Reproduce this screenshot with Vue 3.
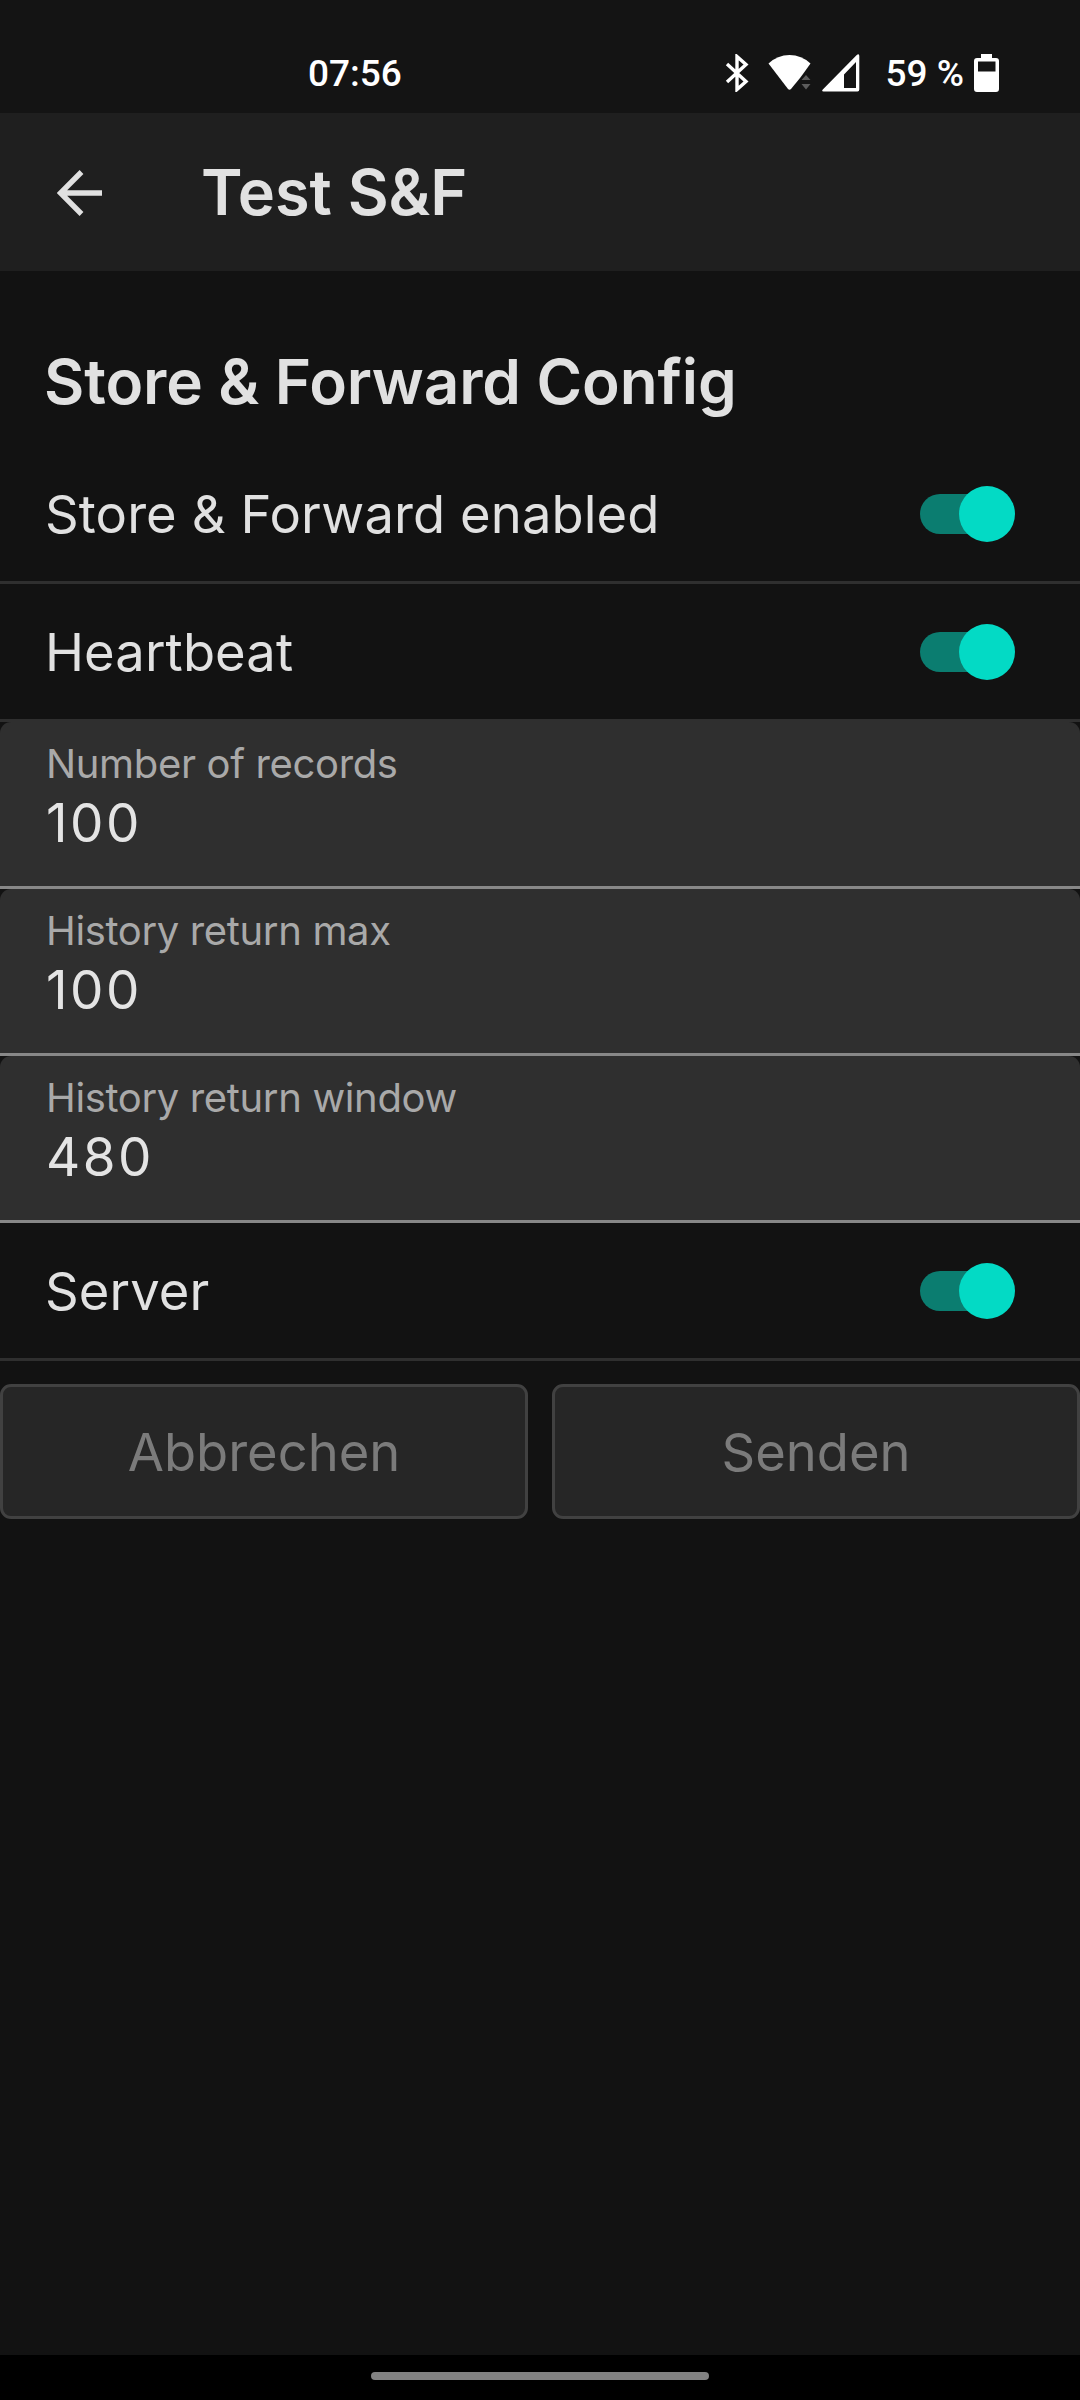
<script setup>

    import { ref } from 'vue';

    const time = ref('07:56');
    const battery = ref('59 %');

    // Module configuration
    const config = ref({
        enabled: true,
        heartbeat: true,
        records: 100,
        historyReturnMax: 100,
        historyReturnWindow: 480,
        server: true,
    });

    const switches = [
        { key: 'enabled', label: 'Store & Forward enabled' },
        { key: 'heartbeat', label: 'Heartbeat' },
    ];

    const fields = [
        { key: 'records', label: 'Number of records' },
        { key: 'historyReturnMax', label: 'History return max' },
        { key: 'historyReturnWindow', label: 'History return window' },
    ];

    const toggle = (key) => {
        config.value[key] = !config.value[key];
    }

</script>

<template>
    <div class="screen">

        <div class="status-bar">
            <span class="time">{{ time }}</span>
            <div class="status-icons">
                <svg class="icon-bluetooth" width="24" height="38" viewBox="0 0 24 38">
                    <path d="M2 10 L21 27.5 L12 35.5 V2.5 L21 10.5 L2 28" fill="none" stroke="#fff" stroke-width="3.4" />
                </svg>
                <svg class="icon-wifi" width="44" height="38" viewBox="0 0 44 38">
                    <path d="M0.5 9.5 Q9.5 1 21.5 1 Q33.5 1 42.5 9.5 L35 20 L32 24 L23 35 Q21.5 36.5 20 35 Z" fill="#fff" />
                    <path d="M33.5 26 L38 21 L42.5 26 Z M33.5 30 H42.5 L38 35.5 Z" fill="#5c5c5c" />
                </svg>
                <svg class="icon-signal" width="38" height="38" viewBox="0 0 38 38">
                    <path fill-rule="evenodd" d="M35 0.8 Q37.3 -0.5 37.3 2 V35.5 Q37.3 37.5 35.5 37.5 H1.5 Q-0.8 37.5 0.8 35.5 Z M34 8 L22 20.5 V34 H34 Z" fill="#fff" />
                </svg>
                <span class="battery-text">{{ battery }}</span>
                <svg class="icon-battery" width="25" height="38" viewBox="0 0 25 38">
                    <path fill-rule="evenodd" d="M7 0 H18 V4 H22 Q25 4 25 7 V35 Q25 38 22 38 H3 Q0 38 0 35 V7 Q0 4 3 4 H7 Z M4 7.5 V17.5 H21.5 V7.5 Z" fill="#fff" />
                </svg>
            </div>
        </div>

        <header class="app-bar">
            <svg class="icon-back" width="46" height="46" viewBox="0 0 46 46">
                <path d="M24.5 2 L3.5 23 L24.5 44 M4 23 H45" fill="none" stroke="#e1e1e1" stroke-width="5.4" />
            </svg>
            <h1 class="title">Test S&amp;F</h1>
        </header>

        <main class="content">
            <h2 class="heading">Store &amp; Forward Config</h2>

            <div v-for="item in switches" :key="item.key" class="row" @click="toggle(item.key)">
                <span class="row-label">{{ item.label }}</span>
                <span class="switch" :class="{'switch-on': config[item.key]}"><span class="thumb"></span></span>
            </div>

            <div v-for="field in fields" :key="field.key" class="field">
                <span class="field-label">{{ field.label }}</span>
                <span class="field-value">{{ config[field.key] }}</span>
            </div>

            <div class="row" @click="toggle('server')">
                <span class="row-label">Server</span>
                <span class="switch" :class="{'switch-on': config.server}"><span class="thumb"></span></span>
            </div>

            <div class="actions">
                <button class="btn" disabled>Abbrechen</button>
                <button class="btn" disabled>Senden</button>
            </div>
        </main>

        <div class="nav-bar">
            <div class="nav-pill"></div>
        </div>

    </div>
</template>

<style>
    body{
        margin: 0;
        background-color: #121212;
    }
</style>

<style scoped>

    .screen{
        display: flex;
        flex-direction: column;
        width: 1080px;
        height: 2400px;
        overflow: hidden;
        background-color: #121212;
        color: #e1e1e1;
        font-family: Inter, "Liberation Sans", sans-serif;
    }

    .status-bar{
        display: flex;
        justify-content: space-between;
        align-items: center;
        box-sizing: border-box;
        height: 113px;
        padding: 33px 81px 0 308px;
        background-color: #141414;
        color: #ffffff;
        font-family: Roboto, sans-serif;
        font-size: 37px;
        font-weight: 500;
        line-height: 44px;
    }

    .time{
        padding-top: 1px;
    }

    .status-icons{
        display: flex;
        align-items: center;
    }

    .icon-wifi{
        margin-left: 19px;
    }

    .icon-signal{
        margin-left: 10px;
    }

    .battery-text{
        margin-left: 26px;
        padding-top: 1px;
    }

    .icon-battery{
        margin-left: 10px;
    }

    .app-bar{
        display: flex;
        align-items: center;
        height: 158px;
        padding-left: 57px;
        background-color: #1f1f1f;
    }

    .icon-back{
        margin-top: 1px;
    }

    .title{
        margin: 0 0 0 98px;
        font-size: 63px;
        font-weight: 600;
        line-height: 76px;
    }

    .content{
        flex: 1;
    }

    .heading{
        display: flex;
        align-items: center;
        box-sizing: border-box;
        height: 175px;
        margin: 0;
        padding: 46px 0 0 44px;
        font-size: 62px;
        font-weight: 600;
        letter-spacing: -0.1px;
        white-space: nowrap;
    }

    .row{
        display: flex;
        align-items: center;
        justify-content: space-between;
        box-sizing: border-box;
        height: 138px;
        padding: 0 65px 0 45px;
        border-bottom: 3px solid #2f2f2f;
    }

    .row-label{
        padding-top: 1px;
        font-size: 52.5px;
        line-height: 64px;
        letter-spacing: 0.1px;
        white-space: nowrap;
    }

    .switch{
        display: flex;
        align-items: center;
        width: 90px;
        height: 40px;
        margin-right: 5px;
        border-radius: 20px;
        background-color: #4a4a4a;
    }

    .switch-on{
        justify-content: flex-end;
        background-color: #0b7d70;
    }

    .thumb{
        width: 56px;
        height: 56px;
        margin-right: -5px;
        border-radius: 50%;
        background-color: #b9b9b9;
    }

    .switch-on .thumb{
        background-color: #03dac5;
    }

    .field{
        display: flex;
        flex-direction: column;
        gap: 5px;
        box-sizing: border-box;
        height: 167px;
        padding: 18px 45px 0 46px;
        border-bottom: 3px solid #888888;
        border-radius: 11px 11px 0 0;
        background-color: #2f2f2f;
    }

    .field-label{
        font-size: 40px;
        line-height: 48px;
        letter-spacing: -0.35px;
        color: #a9a9a9;
        white-space: nowrap;
    }

    .field-value{
        font-size: 53px;
        line-height: 60px;
        letter-spacing: 2.5px;
        color: #e4e4e4;
    }

    .actions{
        display: flex;
        gap: 24px;
        padding-top: 23px;
    }

    .btn{
        flex: 1;
        box-sizing: border-box;
        height: 135px;
        padding: 1px 0 0;
        border: 3px solid #414141;
        border-radius: 11px;
        background-color: #262626;
        color: #7b7b7b;
        font-family: inherit;
        font-size: 52.5px;
    }

    .nav-bar{
        display: flex;
        justify-content: center;
        box-sizing: border-box;
        height: 45px;
        padding-top: 17px;
        background-color: #000000;
    }

    .nav-pill{
        width: 338px;
        height: 8px;
        border-radius: 4px;
        background-color: #828282;
    }
</style>
